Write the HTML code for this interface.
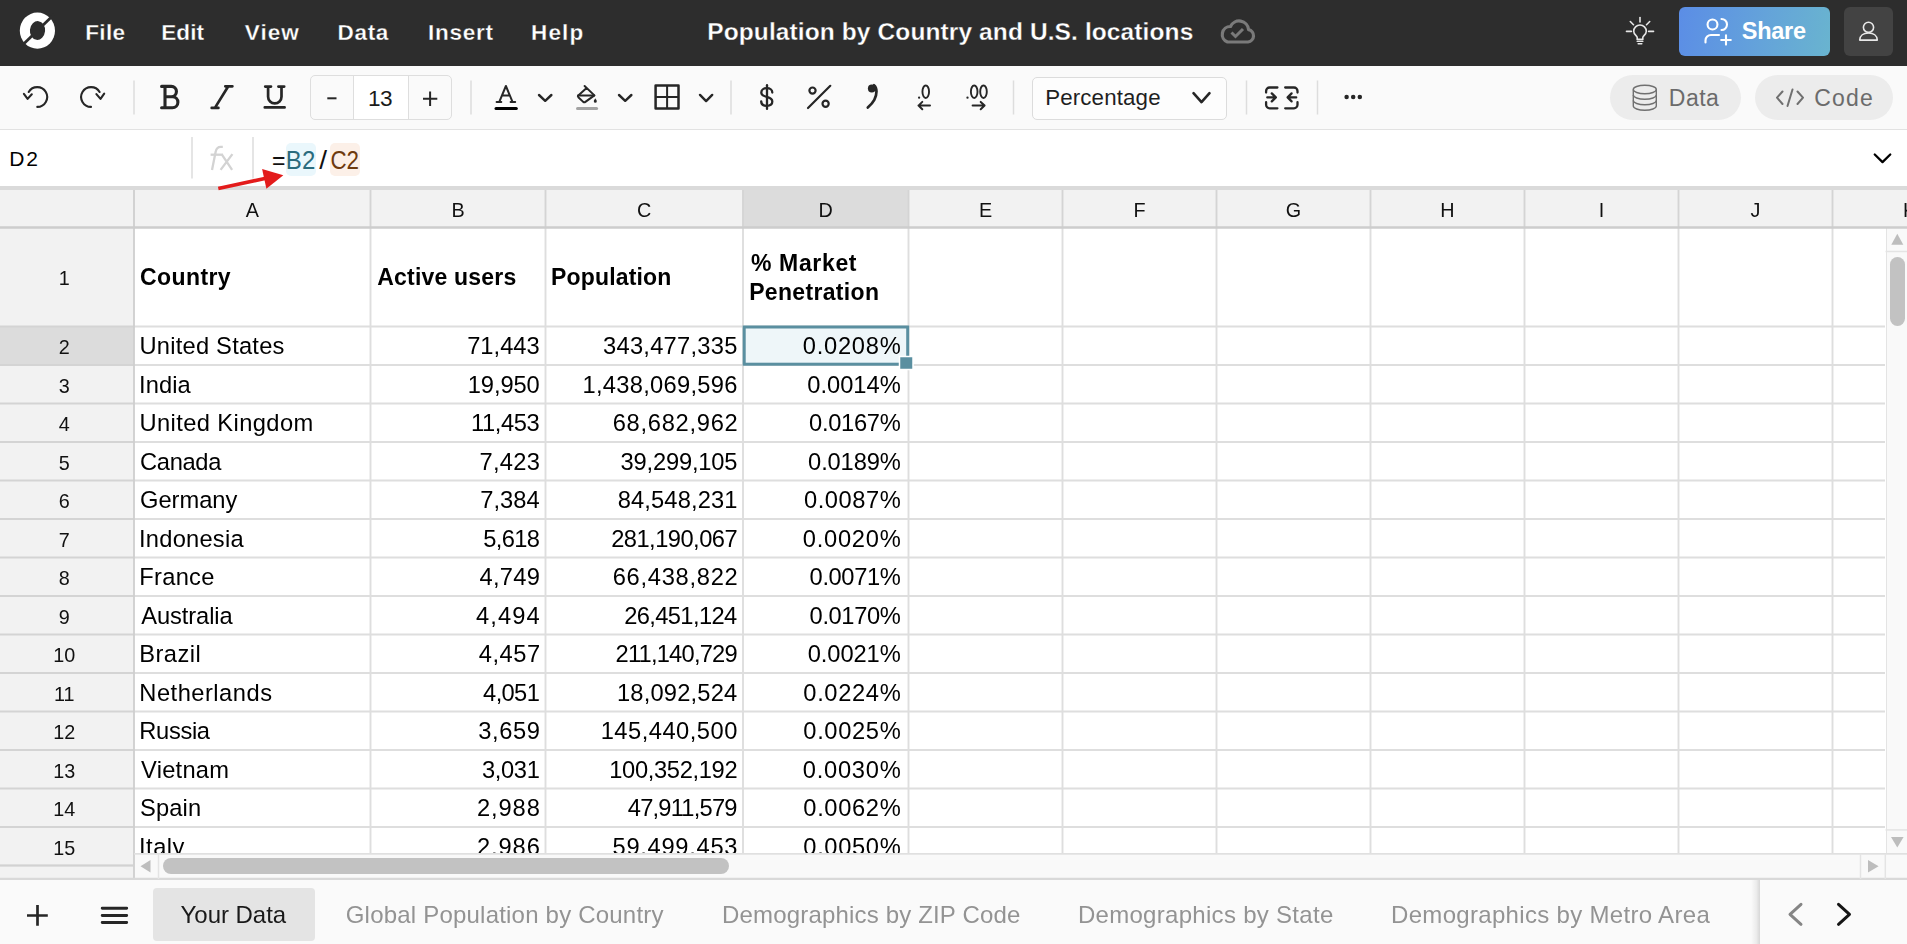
<!DOCTYPE html>
<html><head><meta charset="utf-8"><title>Population by Country and U.S. locations</title>
<style>
html,body{margin:0;padding:0;}
body{width:1907px;height:944px;overflow:hidden;position:relative;background:#fff;font-family:'Liberation Sans', sans-serif;}
svg text{font-family:'Liberation Sans', sans-serif;white-space:pre;}
</style></head><body>
<div style="position:absolute;left:0px;top:0px;width:1907px;height:66px;background:#2d2d2d"></div>
<div style="position:absolute;left:0px;top:66px;width:1907px;height:63px;background:#fafafa"></div>
<div style="position:absolute;left:0px;top:129px;width:1907px;height:1px;background:#e2e2e2"></div>
<div style="position:absolute;left:0px;top:130px;width:1907px;height:56px;background:#fff"></div>
<div style="position:absolute;left:0px;top:186px;width:1907px;height:4px;background:#dadada"></div>
<div style="position:absolute;left:0px;top:190px;width:1907px;height:689px;background:#fff"></div>
<div style="position:absolute;left:0px;top:190px;width:1907px;height:37.5px;background:#f2f2f2"></div>
<div style="position:absolute;left:0px;top:190px;width:134px;height:689px;background:#f2f2f2"></div>
<div style="position:absolute;left:743px;top:190px;width:165px;height:37.5px;background:#dcdcdc"></div>
<div style="position:absolute;left:0px;top:326.5px;width:134px;height:38.5px;background:#dcdcdc"></div>
<div style="position:absolute;left:0px;top:879px;width:1907px;height:65px;background:#fafafa"></div>
<div style="position:absolute;left:1679px;top:7px;width:151px;height:49px;border-radius:6px;background:linear-gradient(100deg,#5b8de6 0%,#64a3da 55%,#69b4cf 100%)"></div>
<div style="position:absolute;left:1844px;top:7px;width:49px;height:49px;background:#434343;border-radius:6px"></div>
<div style="position:absolute;left:309.8px;top:75px;width:140.5px;height:43px;border:1px solid #dedede;border-radius:5px;box-sizing:content-box"></div>
<div style="position:absolute;left:352.9px;top:76px;width:56px;height:43px;background:#fff;border-left:1px solid #dedede;border-right:1px solid #dedede;box-sizing:border-box"></div>
<div style="position:absolute;left:1031.5px;top:76.5px;width:193px;height:41px;border:1px solid #dcdcdc;border-radius:5px;background:#fdfdfd"></div>
<div style="position:absolute;left:1610px;top:75px;width:131px;height:45px;background:#ececec;border-radius:23px"></div>
<div style="position:absolute;left:1755px;top:75px;width:138px;height:45px;background:#ececec;border-radius:23px"></div>
<div style="position:absolute;left:286px;top:142.9px;width:29.9px;height:33px;background:#eaf7fc;border-radius:5px"></div>
<div style="position:absolute;left:330.1px;top:142.9px;width:29.9px;height:33px;background:#fcf0e8;border-radius:5px"></div>
<div style="position:absolute;left:743px;top:326.5px;width:165.5px;height:38.5px;background:#eef6f9"></div>
<div style="position:absolute;left:1885.5px;top:227.5px;width:21.5px;height:626.5px;background:#f9f9f9;border-left:1.5px solid #e4e4e4;box-sizing:border-box"></div>
<div style="position:absolute;left:1889.7px;top:256.8px;width:15px;height:69.6px;background:#c2c2c2;border-radius:8px"></div>
<div style="position:absolute;left:134px;top:853.5px;width:1773px;height:25.5px;background:#f9f9f9"></div>
<div style="position:absolute;left:163px;top:858.3px;width:566px;height:15.8px;background:#c2c2c2;border-radius:8px"></div>
<div style="position:absolute;left:153px;top:888px;width:162px;height:53px;background:#e4e4e4;border-radius:4px"></div>
<div style="position:absolute;left:1751px;top:880px;width:9px;height:64px;background:linear-gradient(90deg,rgba(0,0,0,0) 0%,rgba(0,0,0,0.06) 60%,rgba(0,0,0,0.14) 100%)"></div>
<svg width="1907" height="944" viewBox="0 0 1907 944" style="position:absolute;left:0;top:0">
<ellipse cx="37.4" cy="30.65" rx="17.6" ry="18.1" fill="#fff"/>
<ellipse cx="37.5" cy="30.5" rx="7.6" ry="9.4" fill="#2d2d2d" transform="rotate(6 37.5 30.5)"/>
<line x1="21" y1="46.5" x2="54" y2="14.5" stroke="#2d2d2d" stroke-width="2.8"/>
<text x="85.30" y="39.5" font-size="22.5" fill="#fff" font-weight="bold" textLength="39.77" lengthAdjust="spacing" stroke="#2d2d2d" stroke-width="0.3">File</text>
<text x="161.30" y="39.5" font-size="22.5" fill="#fff" font-weight="bold" textLength="42.65" lengthAdjust="spacing" stroke="#2d2d2d" stroke-width="0.3">Edit</text>
<text x="244.75" y="39.5" font-size="22.5" fill="#fff" font-weight="bold" textLength="54.07" lengthAdjust="spacing" stroke="#2d2d2d" stroke-width="0.3">View</text>
<text x="337.40" y="39.5" font-size="22.5" fill="#fff" font-weight="bold" textLength="50.98" lengthAdjust="spacing" stroke="#2d2d2d" stroke-width="0.3">Data</text>
<text x="428.00" y="39.5" font-size="22.5" fill="#fff" font-weight="bold" textLength="64.88" lengthAdjust="spacing" stroke="#2d2d2d" stroke-width="0.3">Insert</text>
<text x="531.10" y="39.5" font-size="22.5" fill="#fff" font-weight="bold" textLength="52.12" lengthAdjust="spacing" stroke="#2d2d2d" stroke-width="0.3">Help</text>
<text x="707.25" y="39.6" font-size="24.5" fill="#fff" font-weight="bold" textLength="486.06" lengthAdjust="spacing" stroke="#2d2d2d" stroke-width="0.3">Population by Country and U.S. locations</text>
<path d="M1227.5 42 H1248 A6.3 6.3 0 0 0 1248.6 29.6 A9.5 9.5 0 0 0 1230.5 26.5 A8 8 0 0 0 1227.5 42 Z" fill="none" stroke="#7a7a7a" stroke-width="3.2" stroke-linejoin="round"/>
<path d="M1231.5 32.5 L1235.5 36.5 L1243 29" fill="none" stroke="#7a7a7a" stroke-width="3"/>
<g fill="none" stroke="#e6e6e6" stroke-width="1.6" stroke-linecap="round"><path d="M1640 17.5 V22"/><path d="M1630.3 21.5 L1633.5 24.7"/><path d="M1649.7 21.5 L1646.5 24.7"/><path d="M1626.5 31.4 H1631.4"/><path d="M1648.6 31.4 H1653.5"/><path d="M1637.2 39.3 V37.6 C1637.2 35.8 1633.7 34.6 1633.7 31.3 A6.3 6.3 0 0 1 1646.3 31.3 C1646.3 34.6 1642.8 35.8 1642.8 37.6 V39.3 Z"/><path d="M1637.2 41.3 H1642.8"/><path d="M1638.2 43.7 H1641.8"/></g>
<g fill="none" stroke="#fff" stroke-width="2.1" stroke-linecap="round"><circle cx="1712.5" cy="24.5" r="4.95"/><path d="M1721.5 19 A5.5 5.5 0 0 1 1721.5 30"/><path d="M1705.5 42.5 V40.5 A5.5 5.5 0 0 1 1711 35 H1719"/><path d="M1721.2 40 H1730.8 M1726 35.2 V44.6"/></g>
<text x="1741.75" y="39" font-size="23.5" fill="#fff" font-weight="bold" textLength="64.28" lengthAdjust="spacing" >Share</text>
<g fill="none" stroke="#e8e8e8" stroke-width="1.6" stroke-linejoin="round"><circle cx="1868.5" cy="27.3" r="5.1"/><path d="M1859.7 40.1 C1859.9 35.6 1863.5 33 1868.5 33 C1873.5 33 1877.1 35.6 1877.3 40.1 Z"/></g>
<g fill="none" stroke="#262626" stroke-width="2.1" stroke-linecap="round" stroke-linejoin="round"><path d="M37.3 106.9 A9.9 9.9 0 1 0 28.7 92"/><path d="M23.9 93.8 L27.6 98.9 L31.8 94.3"/><path d="M91 106.9 A9.9 9.9 0 1 1 99.6 92"/><path d="M96.4 94.1 L100.5 98.9 L104.2 93.6"/></g>
<line x1="134" y1="80.5" x2="134" y2="114.5" stroke="#dddddd" stroke-width="1.5"/>
<line x1="471" y1="80.5" x2="471" y2="114.5" stroke="#dddddd" stroke-width="1.5"/>
<line x1="731" y1="80.5" x2="731" y2="114.5" stroke="#dddddd" stroke-width="1.5"/>
<line x1="1013.5" y1="80.5" x2="1013.5" y2="114.5" stroke="#dddddd" stroke-width="1.5"/>
<line x1="1246.5" y1="80.5" x2="1246.5" y2="114.5" stroke="#dddddd" stroke-width="1.5"/>
<line x1="1317.5" y1="80.5" x2="1317.5" y2="114.5" stroke="#dddddd" stroke-width="1.5"/>
<g fill="none" stroke="#262626" stroke-width="3.1" stroke-linecap="round" stroke-linejoin="round"><path d="M161.6 86.4 H171.3 A5.15 5.15 0 0 1 171.3 96.7 H165 M171.3 96.7 H172.4 A5.5 5.5 0 0 1 172.4 107.7 H161.6 M165 86.4 V107.7"/></g>
<g fill="none" stroke="#262626" stroke-width="2.7" stroke-linecap="round"><path d="M225.3 86.3 H232.4 M211.7 107.9 H218.4 M228.3 86.3 L214.9 107.9"/><path d="M265.2 86.6 H271 M278.4 86.6 H284.2 M268.1 86.6 V96.7 A6.7 6.7 0 0 0 281.5 96.7 V86.6 M264.8 107.4 H284.6"/></g>
<path d="M327.3 98.3 H336.5" stroke="#262626" stroke-width="2"/>
<text x="367.95" y="105.8" font-size="22.6" fill="#1a1a1a" font-weight="normal" textLength="24.74" lengthAdjust="spacing" >13</text>
<path d="M423 98.8 H437.3 M430.1 91.6 V106" stroke="#262626" stroke-width="2"/>
<g fill="none" stroke="#262626" stroke-width="2" stroke-linecap="round" stroke-linejoin="round"><path d="M499.3 101.8 L505.9 86 L512.5 101.8 M502.3 95.6 H509.5 M496.6 102 H501.3 M510.6 102 H515.2"/></g>
<path d="M496 108.4 H516.3" stroke="#000" stroke-width="3" stroke-linecap="round"/>
<path d="M539.0 95.0 L545.2 100.80000000000001 L551.4000000000001 95.0" fill="none" stroke="#262626" stroke-width="2.4" stroke-linecap="round" stroke-linejoin="round"/>
<g fill="none" stroke="#262626" stroke-width="2" stroke-linecap="round" stroke-linejoin="round"><path d="M584.6 86 L594.4 95.4 L585.4 101.9 Q584.3 102.7 583.2 101.9 L578.3 97.2 Q577.5 96.3 578.3 95.4 L586.6 88"/><path d="M578 95.5 H594.2"/></g><path d="M595.3 98.3 C594.6 99.6 593.8 100.3 593.8 101.3 A1.5 1.5 0 0 0 596.8 101.3 C596.8 100.3 596 99.6 595.3 98.3 Z" fill="#262626"/>
<path d="M577.5 108.5 H596.6" stroke="#a3a3a3" stroke-width="3" stroke-linecap="round"/>
<path d="M619.0 95.0 L625.2 100.80000000000001 L631.4000000000001 95.0" fill="none" stroke="#262626" stroke-width="2.4" stroke-linecap="round" stroke-linejoin="round"/>
<rect x="655.6" y="85.5" width="22.9" height="23" fill="none" stroke="#262626" stroke-width="2.5" stroke-linejoin="round"/><path d="M667.1 85.5 V108.5 M655.6 97 H678.5" stroke="#262626" stroke-width="2"/>
<path d="M700.0 94.95 L706.1 101.05 L712.2 94.95" fill="none" stroke="#262626" stroke-width="2.4" stroke-linecap="round" stroke-linejoin="round"/>
<g fill="none" stroke="#262626" stroke-width="2.3" stroke-linecap="round"><path d="M772.3 92.5 C772.3 89.8 770 88.1 766.8 88.1 C763.6 88.1 761.3 89.8 761.3 92.5 C761.3 95.3 764 96.2 766.8 96.9 C769.8 97.6 772.3 98.7 772.3 101.6 C772.3 104.4 769.8 105.9 766.8 105.9 C763.6 105.9 761.3 104.2 761.2 101.4"/><path d="M767 85.2 V108.9"/></g>
<g fill="none" stroke="#262626" stroke-width="2.2" stroke-linecap="round"><circle cx="812.5" cy="90.6" r="3.1"/><circle cx="825.6" cy="103.7" r="3.1"/><path d="M808 108 L830.3 85.8"/></g>
<path d="M874 85.3 C877.3 88 877.2 94.5 874.3 99.8 C872.8 102.6 870.6 105 867.8 107.5" fill="none" stroke="#262626" stroke-width="2.7" stroke-linecap="round"/><circle cx="871.8" cy="88.5" r="3.9" fill="#262626"/>
<g fill="none" stroke="#262626" stroke-width="1.9"><ellipse cx="925.75" cy="91.7" rx="3.3" ry="6.25"/><ellipse cx="974.2" cy="91.7" rx="3.3" ry="6.25"/><ellipse cx="983.5" cy="91.7" rx="3.3" ry="6.25"/></g>
<circle cx="919.1" cy="97.7" r="1.15" fill="#262626"/><circle cx="967.5" cy="97.7" r="1.15" fill="#262626"/>
<g fill="none" stroke="#262626" stroke-width="2" stroke-linecap="round" stroke-linejoin="round"><path d="M930 105.6 H918.5 M922.3 101.9 L918.5 105.6 L922.3 109.2"/><path d="M972.6 105.6 H984.6 M980.7 101.9 L984.6 105.6 L980.7 109.2"/></g>
<text x="1045.15" y="105.3" font-size="22.3" fill="#1f1f1f" font-weight="normal" textLength="115.40" lengthAdjust="spacing" >Percentage</text>
<path d="M1193.5 93.1 L1201.5 102.1 L1209.5 93.1" fill="none" stroke="#262626" stroke-width="2.6" stroke-linecap="round" stroke-linejoin="round"/>
<g fill="none" stroke="#262626" stroke-width="2.3" stroke-linecap="round" stroke-linejoin="round"><path d="M1277.4 87.5 H1269.6 A3.5 3.5 0 0 0 1266.1 91 V92.6 M1266.1 102.2 V104.8 A3.5 3.5 0 0 0 1269.6 108.3 H1277.4"/><path d="M1285.2 87.5 H1294 A3.5 3.5 0 0 1 1297.5 91 V92.6 M1297.5 102.2 V104.8 A3.5 3.5 0 0 1 1294 108.3 H1285.2"/><path d="M1267.3 97.4 H1275.6 M1271.8 93.4 L1275.8 97.4 L1271.8 101.4"/><path d="M1296.2 97.4 H1287.8 M1291.6 93.4 L1287.6 97.4 L1291.6 101.4"/></g>
<circle cx="1346.6" cy="97.1" r="2.25" fill="#262626"/>
<circle cx="1353.2" cy="97.1" r="2.25" fill="#262626"/>
<circle cx="1359.8" cy="97.1" r="2.25" fill="#262626"/>
<g fill="none" stroke="#707070" stroke-width="1.4"><ellipse cx="1644.8" cy="89.5" rx="11.5" ry="4.2"/><path d="M1633.3 89.5 V106 A11.5 4.2 0 0 0 1656.3 106 V89.5"/><path d="M1633.3 95 A11.5 4.2 0 0 0 1656.3 95 M1633.3 100.5 A11.5 4.2 0 0 0 1656.3 100.5"/></g>
<text x="1668.80" y="105.7" font-size="23" fill="#6b6b6b" font-weight="normal" textLength="50.09" lengthAdjust="spacing" >Data</text>
<g fill="none" stroke="#707070" stroke-width="2" stroke-linecap="round" stroke-linejoin="round"><path d="M1782.5 91.5 L1777 97.7 L1782.5 104 M1797.5 91.5 L1803 97.7 L1797.5 104 M1792.5 89.5 L1787.5 106"/></g>
<text x="1814.15" y="105.7" font-size="23" fill="#6b6b6b" font-weight="normal" textLength="58.53" lengthAdjust="spacing" >Code</text>
<text x="9.25" y="166" font-size="21" fill="#000" font-weight="normal" textLength="28.76" lengthAdjust="spacing" >D2</text>
<line x1="192" y1="137" x2="192" y2="178.5" stroke="#dcdcdc" stroke-width="1.5"/>
<line x1="253" y1="137" x2="253" y2="178.5" stroke="#dcdcdc" stroke-width="1.5"/>
<g fill="none" stroke="#d3d3d3" stroke-width="2.3"><path d="M212 169.9 L215.7 151.6 C216.4 148.4 218.2 146.9 220.6 146.9 H222.8"/><path d="M210.6 154.7 H222.6"/><path d="M221.6 154.1 L232.1 169.9 M232.4 154.1 L220.6 169.9"/></g>
<text x="0" y="168.7" transform="translate(271.94 0) scale(0.9250 1)" font-size="24.9" fill="#111" font-weight="normal">=</text>
<text x="0" y="168.7" transform="translate(285.87 0) scale(0.9651 1)" font-size="24.9" fill="#2a6b7d" font-weight="normal">B2</text>
<text x="0" y="168.9" transform="translate(319.30 0) scale(1.1286 1)" font-size="24.9" fill="#111" font-weight="normal">/</text>
<text x="0" y="168.7" transform="translate(330.38 0) scale(0.8991 1)" font-size="24.9" fill="#6e3a0e" font-weight="normal">C2</text>
<path d="M1874.75 154.5 L1882.5 162.10000000000002 L1890.25 154.5" fill="none" stroke="#000" stroke-width="2.3" stroke-linecap="round" stroke-linejoin="round"/>
</svg>
<svg width="1907" height="944" viewBox="0 0 1907 944" style="position:absolute;left:0;top:0;will-change:transform">
<defs><clipPath id="gridclip"><rect x="134" y="227" width="1751" height="626.5"/></clipPath></defs>
<text x="252.25" y="217" font-size="19.8" fill="#111" font-weight="normal" text-anchor="middle"  style="">A</text>
<text x="458.0" y="217" font-size="19.8" fill="#111" font-weight="normal" text-anchor="middle"  style="">B</text>
<text x="644.25" y="217" font-size="19.8" fill="#111" font-weight="normal" text-anchor="middle"  style="">C</text>
<text x="825.75" y="217" font-size="19.8" fill="#111" font-weight="normal" text-anchor="middle"  style="">D</text>
<text x="985.5" y="217" font-size="19.8" fill="#111" font-weight="normal" text-anchor="middle"  style="">E</text>
<text x="1139.5" y="217" font-size="19.8" fill="#111" font-weight="normal" text-anchor="middle"  style="">F</text>
<text x="1293.5" y="217" font-size="19.8" fill="#111" font-weight="normal" text-anchor="middle"  style="">G</text>
<text x="1447.5" y="217" font-size="19.8" fill="#111" font-weight="normal" text-anchor="middle"  style="">H</text>
<text x="1601.5" y="217" font-size="19.8" fill="#111" font-weight="normal" text-anchor="middle"  style="">I</text>
<text x="1755.5" y="217" font-size="19.8" fill="#111" font-weight="normal" text-anchor="middle"  style="">J</text>
<text x="1903" y="217" font-size="19.8" fill="#111" font-weight="normal" text-anchor="start"  style="">K</text>
<text x="64.3" y="285.3" font-size="19.8" fill="#111" font-weight="normal" text-anchor="middle"  style="">1</text>
<text x="64.3" y="354.05" font-size="19.8" fill="#111" font-weight="normal" text-anchor="middle"  style="">2</text>
<text x="64.3" y="392.55" font-size="19.8" fill="#111" font-weight="normal" text-anchor="middle"  style="">3</text>
<text x="64.3" y="431.05" font-size="19.8" fill="#111" font-weight="normal" text-anchor="middle"  style="">4</text>
<text x="64.3" y="469.55" font-size="19.8" fill="#111" font-weight="normal" text-anchor="middle"  style="">5</text>
<text x="64.3" y="508.05" font-size="19.8" fill="#111" font-weight="normal" text-anchor="middle"  style="">6</text>
<text x="64.3" y="546.55" font-size="19.8" fill="#111" font-weight="normal" text-anchor="middle"  style="">7</text>
<text x="64.3" y="585.05" font-size="19.8" fill="#111" font-weight="normal" text-anchor="middle"  style="">8</text>
<text x="64.3" y="623.55" font-size="19.8" fill="#111" font-weight="normal" text-anchor="middle"  style="">9</text>
<text x="64.3" y="662.05" font-size="19.8" fill="#111" font-weight="normal" text-anchor="middle"  style="">10</text>
<text x="64.3" y="700.55" font-size="19.8" fill="#111" font-weight="normal" text-anchor="middle"  style="">11</text>
<text x="64.3" y="739.05" font-size="19.8" fill="#111" font-weight="normal" text-anchor="middle"  style="">12</text>
<text x="64.3" y="777.55" font-size="19.8" fill="#111" font-weight="normal" text-anchor="middle"  style="">13</text>
<text x="64.3" y="816.05" font-size="19.8" fill="#111" font-weight="normal" text-anchor="middle"  style="">14</text>
<text x="64.3" y="854.55" font-size="19.8" fill="#111" font-weight="normal" text-anchor="middle"  style="">15</text>
<text x="140.10" y="285.3" font-size="23" fill="#000" font-weight="bold" textLength="90.47" lengthAdjust="spacing" >Country</text>
<text x="377.30" y="285.3" font-size="23" fill="#000" font-weight="bold" textLength="138.96" lengthAdjust="spacing" >Active users</text>
<text x="551.10" y="285.3" font-size="23" fill="#000" font-weight="bold" textLength="120.23" lengthAdjust="spacing" >Population</text>
<text x="750.90" y="271.2" font-size="23" fill="#000" font-weight="bold" textLength="105.63" lengthAdjust="spacing" >% Market</text>
<text x="749.20" y="300.2" font-size="23" fill="#000" font-weight="bold" textLength="129.78" lengthAdjust="spacing" >Penetration</text>
<g clip-path="url(#gridclip)">
<text x="139.55" y="354.4" font-size="23.7" fill="#000" font-weight="normal" textLength="144.82" lengthAdjust="spacing" >United States</text>
<text x="467.15" y="354.4" font-size="23.7" fill="#000" font-weight="normal" textLength="72.60" lengthAdjust="spacing" >71,443</text>
<text x="603.00" y="354.4" font-size="23.7" fill="#000" font-weight="normal" textLength="134.38" lengthAdjust="spacing" >343,477,335</text>
<text x="802.80" y="354.4" font-size="23.7" fill="#000" font-weight="normal" textLength="97.97" lengthAdjust="spacing" >0.0208%</text>
<text x="139.05" y="392.9" font-size="23.7" fill="#000" font-weight="normal" textLength="51.72" lengthAdjust="spacing" >India</text>
<text x="467.75" y="392.9" font-size="23.7" fill="#000" font-weight="normal" textLength="72.00" lengthAdjust="spacing" >19,950</text>
<text x="582.45" y="392.9" font-size="23.7" fill="#000" font-weight="normal" textLength="154.93" lengthAdjust="spacing" >1,438,069,596</text>
<text x="807.20" y="392.9" font-size="23.7" fill="#000" font-weight="normal" textLength="93.57" lengthAdjust="spacing" >0.0014%</text>
<text x="139.55" y="431.4" font-size="23.7" fill="#000" font-weight="normal" textLength="173.70" lengthAdjust="spacing" >United Kingdom</text>
<text x="471.05" y="431.4" font-size="23.7" fill="#000" font-weight="normal" textLength="68.70" lengthAdjust="spacing" >11,453</text>
<text x="612.65" y="431.4" font-size="23.7" fill="#000" font-weight="normal" textLength="125.06" lengthAdjust="spacing" >68,682,962</text>
<text x="809.00" y="431.4" font-size="23.7" fill="#000" font-weight="normal" textLength="91.77" lengthAdjust="spacing" >0.0167%</text>
<text x="140.05" y="469.9" font-size="23.7" fill="#000" font-weight="normal" textLength="81.33" lengthAdjust="spacing" >Canada</text>
<text x="479.55" y="469.9" font-size="23.7" fill="#000" font-weight="normal" textLength="60.28" lengthAdjust="spacing" >7,423</text>
<text x="620.60" y="469.9" font-size="23.7" fill="#000" font-weight="normal" textLength="116.86" lengthAdjust="spacing" >39,299,105</text>
<text x="808.10" y="469.9" font-size="23.7" fill="#000" font-weight="normal" textLength="92.67" lengthAdjust="spacing" >0.0189%</text>
<text x="140.05" y="508.4" font-size="23.7" fill="#000" font-weight="normal" textLength="97.22" lengthAdjust="spacing" >Germany</text>
<text x="480.25" y="508.4" font-size="23.7" fill="#000" font-weight="normal" textLength="59.33" lengthAdjust="spacing" >7,384</text>
<text x="617.70" y="508.4" font-size="23.7" fill="#000" font-weight="normal" textLength="119.76" lengthAdjust="spacing" >84,548,231</text>
<text x="803.90" y="508.4" font-size="23.7" fill="#000" font-weight="normal" textLength="96.87" lengthAdjust="spacing" >0.0087%</text>
<text x="139.05" y="546.9" font-size="23.7" fill="#000" font-weight="normal" textLength="104.53" lengthAdjust="spacing" >Indonesia</text>
<text x="483.30" y="546.9" font-size="23.7" fill="#000" font-weight="normal" textLength="56.53" lengthAdjust="spacing" >5,618</text>
<text x="611.15" y="546.9" font-size="23.7" fill="#000" font-weight="normal" textLength="126.48" lengthAdjust="spacing" >281,190,067</text>
<text x="802.80" y="546.9" font-size="23.7" fill="#000" font-weight="normal" textLength="97.97" lengthAdjust="spacing" >0.0020%</text>
<text x="139.30" y="585.4" font-size="23.7" fill="#000" font-weight="normal" textLength="75.08" lengthAdjust="spacing" >France</text>
<text x="479.50" y="585.4" font-size="23.7" fill="#000" font-weight="normal" textLength="60.33" lengthAdjust="spacing" >4,749</text>
<text x="612.65" y="585.4" font-size="23.7" fill="#000" font-weight="normal" textLength="125.06" lengthAdjust="spacing" >66,438,822</text>
<text x="809.60" y="585.4" font-size="23.7" fill="#000" font-weight="normal" textLength="91.17" lengthAdjust="spacing" >0.0071%</text>
<text x="141.30" y="623.9" font-size="23.7" fill="#000" font-weight="normal" textLength="91.32" lengthAdjust="spacing" >Australia</text>
<text x="476.00" y="623.9" font-size="23.7" fill="#000" font-weight="normal" textLength="63.58" lengthAdjust="spacing" >4,494</text>
<text x="624.15" y="623.9" font-size="23.7" fill="#000" font-weight="normal" textLength="113.06" lengthAdjust="spacing" >26,451,124</text>
<text x="809.60" y="623.9" font-size="23.7" fill="#000" font-weight="normal" textLength="91.17" lengthAdjust="spacing" >0.0170%</text>
<text x="139.30" y="662.4" font-size="23.7" fill="#000" font-weight="normal" textLength="61.38" lengthAdjust="spacing" >Brazil</text>
<text x="478.80" y="662.4" font-size="23.7" fill="#000" font-weight="normal" textLength="61.28" lengthAdjust="spacing" >4,457</text>
<text x="615.55" y="662.4" font-size="23.7" fill="#000" font-weight="normal" textLength="122.07" lengthAdjust="spacing" >211,140,729</text>
<text x="807.70" y="662.4" font-size="23.7" fill="#000" font-weight="normal" textLength="93.07" lengthAdjust="spacing" >0.0021%</text>
<text x="139.30" y="700.9" font-size="23.7" fill="#000" font-weight="normal" textLength="132.68" lengthAdjust="spacing" >Netherlands</text>
<text x="483.10" y="700.9" font-size="23.7" fill="#000" font-weight="normal" textLength="56.73" lengthAdjust="spacing" >4,051</text>
<text x="616.95" y="700.9" font-size="23.7" fill="#000" font-weight="normal" textLength="120.26" lengthAdjust="spacing" >18,092,524</text>
<text x="803.30" y="700.9" font-size="23.7" fill="#000" font-weight="normal" textLength="97.47" lengthAdjust="spacing" >0.0224%</text>
<text x="139.30" y="739.4" font-size="23.7" fill="#000" font-weight="normal" textLength="70.71" lengthAdjust="spacing" >Russia</text>
<text x="478.30" y="739.4" font-size="23.7" fill="#000" font-weight="normal" textLength="61.53" lengthAdjust="spacing" >3,659</text>
<text x="600.65" y="739.4" font-size="23.7" fill="#000" font-weight="normal" textLength="136.73" lengthAdjust="spacing" >145,440,500</text>
<text x="803.30" y="739.4" font-size="23.7" fill="#000" font-weight="normal" textLength="97.47" lengthAdjust="spacing" >0.0025%</text>
<text x="141.05" y="777.9" font-size="23.7" fill="#000" font-weight="normal" textLength="87.92" lengthAdjust="spacing" >Vietnam</text>
<text x="482.00" y="777.9" font-size="23.7" fill="#000" font-weight="normal" textLength="57.83" lengthAdjust="spacing" >3,031</text>
<text x="609.25" y="777.9" font-size="23.7" fill="#000" font-weight="normal" textLength="128.38" lengthAdjust="spacing" >100,352,192</text>
<text x="802.80" y="777.9" font-size="23.7" fill="#000" font-weight="normal" textLength="97.97" lengthAdjust="spacing" >0.0030%</text>
<text x="140.05" y="816.4" font-size="23.7" fill="#000" font-weight="normal" textLength="61.14" lengthAdjust="spacing" >Spain</text>
<text x="476.95" y="816.4" font-size="23.7" fill="#000" font-weight="normal" textLength="62.88" lengthAdjust="spacing" >2,988</text>
<text x="627.80" y="816.4" font-size="23.7" fill="#000" font-weight="normal" textLength="109.65" lengthAdjust="spacing" >47,911,579</text>
<text x="803.30" y="816.4" font-size="23.7" fill="#000" font-weight="normal" textLength="97.47" lengthAdjust="spacing" >0.0062%</text>
<text x="139.05" y="854.9" font-size="23.7" fill="#000" font-weight="normal" textLength="45.30" lengthAdjust="spacing" >Italy</text>
<text x="476.95" y="854.9" font-size="23.7" fill="#000" font-weight="normal" textLength="62.88" lengthAdjust="spacing" >2,986</text>
<text x="612.50" y="854.9" font-size="23.7" fill="#000" font-weight="normal" textLength="124.96" lengthAdjust="spacing" >59,499,453</text>
<text x="803.30" y="854.9" font-size="23.7" fill="#000" font-weight="normal" textLength="97.47" lengthAdjust="spacing" >0.0050%</text>
</g>
<line x1="134" y1="326.5" x2="1885" y2="326.5" stroke="#dedede" stroke-width="1.9"/>
<line x1="134" y1="365.0" x2="1885" y2="365.0" stroke="#dedede" stroke-width="1.9"/>
<line x1="134" y1="403.5" x2="1885" y2="403.5" stroke="#dedede" stroke-width="1.9"/>
<line x1="134" y1="442.0" x2="1885" y2="442.0" stroke="#dedede" stroke-width="1.9"/>
<line x1="134" y1="480.5" x2="1885" y2="480.5" stroke="#dedede" stroke-width="1.9"/>
<line x1="134" y1="519.0" x2="1885" y2="519.0" stroke="#dedede" stroke-width="1.9"/>
<line x1="134" y1="557.5" x2="1885" y2="557.5" stroke="#dedede" stroke-width="1.9"/>
<line x1="134" y1="596.0" x2="1885" y2="596.0" stroke="#dedede" stroke-width="1.9"/>
<line x1="134" y1="634.5" x2="1885" y2="634.5" stroke="#dedede" stroke-width="1.9"/>
<line x1="134" y1="673.0" x2="1885" y2="673.0" stroke="#dedede" stroke-width="1.9"/>
<line x1="134" y1="711.5" x2="1885" y2="711.5" stroke="#dedede" stroke-width="1.9"/>
<line x1="134" y1="750.0" x2="1885" y2="750.0" stroke="#dedede" stroke-width="1.9"/>
<line x1="134" y1="788.5" x2="1885" y2="788.5" stroke="#dedede" stroke-width="1.9"/>
<line x1="134" y1="827.0" x2="1885" y2="827.0" stroke="#dedede" stroke-width="1.9"/>
<line x1="0" y1="326.5" x2="134" y2="326.5" stroke="#d4d4d4" stroke-width="1.9"/>
<line x1="0" y1="365.0" x2="134" y2="365.0" stroke="#d4d4d4" stroke-width="1.9"/>
<line x1="0" y1="403.5" x2="134" y2="403.5" stroke="#d4d4d4" stroke-width="1.9"/>
<line x1="0" y1="442.0" x2="134" y2="442.0" stroke="#d4d4d4" stroke-width="1.9"/>
<line x1="0" y1="480.5" x2="134" y2="480.5" stroke="#d4d4d4" stroke-width="1.9"/>
<line x1="0" y1="519.0" x2="134" y2="519.0" stroke="#d4d4d4" stroke-width="1.9"/>
<line x1="0" y1="557.5" x2="134" y2="557.5" stroke="#d4d4d4" stroke-width="1.9"/>
<line x1="0" y1="596.0" x2="134" y2="596.0" stroke="#d4d4d4" stroke-width="1.9"/>
<line x1="0" y1="634.5" x2="134" y2="634.5" stroke="#d4d4d4" stroke-width="1.9"/>
<line x1="0" y1="673.0" x2="134" y2="673.0" stroke="#d4d4d4" stroke-width="1.9"/>
<line x1="0" y1="711.5" x2="134" y2="711.5" stroke="#d4d4d4" stroke-width="1.9"/>
<line x1="0" y1="750.0" x2="134" y2="750.0" stroke="#d4d4d4" stroke-width="1.9"/>
<line x1="0" y1="788.5" x2="134" y2="788.5" stroke="#d4d4d4" stroke-width="1.9"/>
<line x1="0" y1="827.0" x2="134" y2="827.0" stroke="#d4d4d4" stroke-width="1.9"/>
<line x1="0" y1="865.5" x2="134" y2="865.5" stroke="#d4d4d4" stroke-width="1.9"/>
<line x1="370.5" y1="227.5" x2="370.5" y2="853.5" stroke="#dedede" stroke-width="1.9"/>
<line x1="370.5" y1="190" x2="370.5" y2="227.5" stroke="#d4d4d4" stroke-width="1.9"/>
<line x1="545.5" y1="227.5" x2="545.5" y2="853.5" stroke="#dedede" stroke-width="1.9"/>
<line x1="545.5" y1="190" x2="545.5" y2="227.5" stroke="#d4d4d4" stroke-width="1.9"/>
<line x1="743" y1="227.5" x2="743" y2="853.5" stroke="#dedede" stroke-width="1.9"/>
<line x1="743" y1="190" x2="743" y2="227.5" stroke="#d4d4d4" stroke-width="1.9"/>
<line x1="908.5" y1="227.5" x2="908.5" y2="853.5" stroke="#dedede" stroke-width="1.9"/>
<line x1="908.5" y1="190" x2="908.5" y2="227.5" stroke="#d4d4d4" stroke-width="1.9"/>
<line x1="1062.5" y1="227.5" x2="1062.5" y2="853.5" stroke="#dedede" stroke-width="1.9"/>
<line x1="1062.5" y1="190" x2="1062.5" y2="227.5" stroke="#d4d4d4" stroke-width="1.9"/>
<line x1="1216.5" y1="227.5" x2="1216.5" y2="853.5" stroke="#dedede" stroke-width="1.9"/>
<line x1="1216.5" y1="190" x2="1216.5" y2="227.5" stroke="#d4d4d4" stroke-width="1.9"/>
<line x1="1370.5" y1="227.5" x2="1370.5" y2="853.5" stroke="#dedede" stroke-width="1.9"/>
<line x1="1370.5" y1="190" x2="1370.5" y2="227.5" stroke="#d4d4d4" stroke-width="1.9"/>
<line x1="1524.5" y1="227.5" x2="1524.5" y2="853.5" stroke="#dedede" stroke-width="1.9"/>
<line x1="1524.5" y1="190" x2="1524.5" y2="227.5" stroke="#d4d4d4" stroke-width="1.9"/>
<line x1="1678.5" y1="227.5" x2="1678.5" y2="853.5" stroke="#dedede" stroke-width="1.9"/>
<line x1="1678.5" y1="190" x2="1678.5" y2="227.5" stroke="#d4d4d4" stroke-width="1.9"/>
<line x1="1832.5" y1="227.5" x2="1832.5" y2="853.5" stroke="#dedede" stroke-width="1.9"/>
<line x1="1832.5" y1="190" x2="1832.5" y2="227.5" stroke="#d4d4d4" stroke-width="1.9"/>
<line x1="134" y1="190" x2="134" y2="879" stroke="#cfcfcf" stroke-width="1.8"/>
<line x1="0" y1="227.5" x2="1907" y2="227.5" stroke="#cdcdcd" stroke-width="2.4"/>
<rect x="744.2" y="327" width="163.5" height="37.2" fill="none" stroke="#5a8fa0" stroke-width="3"/>
<rect x="899.5" y="356.5" width="13.5" height="13" fill="#5a8fa0" stroke="#fff" stroke-width="1.5"/>
<path d="M218.3 188.4 L266 178.3" stroke="#e31b1b" stroke-width="3.6" fill="none"/><path d="M283.3 175.2 L262.1 169.1 L266.4 188.7 Z" fill="#e31b1b"/>
<path d="M1891.3 244.8 L1897.3 233.7 L1903.3 244.8 Z" fill="#bdbdbd"/>
<line x1="1885.5" y1="251.5" x2="1907" y2="251.5" stroke="#e4e4e4" stroke-width="1.5"/>
<path d="M1891 837 L1897.3 847.6 L1903.6 837 Z" fill="#bdbdbd"/>
<line x1="1885.5" y1="829.9" x2="1907" y2="829.9" stroke="#e4e4e4" stroke-width="1.5"/>
<line x1="134" y1="853.9" x2="1907" y2="853.9" stroke="#e0e0e0" stroke-width="1.6"/>
<line x1="0" y1="865.5" x2="134" y2="865.5" stroke="#d2d2d2" stroke-width="1.6"/>
<line x1="0" y1="878.9" x2="1907" y2="878.9" stroke="#d9d9d9" stroke-width="2.3"/>
<line x1="158.5" y1="853.9" x2="158.5" y2="879" stroke="#e4e4e4" stroke-width="1.5"/>
<path d="M150.5 860 L140.5 866.2 L150.5 872.5 Z" fill="#bdbdbd"/>
<line x1="1860.5" y1="853.9" x2="1860.5" y2="879" stroke="#e4e4e4" stroke-width="1.5"/>
<line x1="1885.3" y1="853.9" x2="1885.3" y2="879" stroke="#e4e4e4" stroke-width="1.5"/>
<path d="M1868 860 L1878.6 866.2 L1868 872.5 Z" fill="#bdbdbd"/>
<path d="M37.5 905 V925.8 M27 915.5 H47.8" stroke="#262626" stroke-width="2.7"/>
<path d="M102.2 908.3 H126.7 M102.2 915.5 H126.7 M102.2 922.5 H126.7" stroke="#262626" stroke-width="2.9" stroke-linecap="round"/>
<text x="180.60" y="923.2" font-size="24" fill="#1a1a1a" font-weight="normal" textLength="105.51" lengthAdjust="spacing" >Your Data</text>
<text x="345.75" y="923.2" font-size="24" fill="#939393" font-weight="normal" textLength="317.74" lengthAdjust="spacing" >Global Population by Country</text>
<text x="722.10" y="923.2" font-size="24" fill="#939393" font-weight="normal" textLength="298.23" lengthAdjust="spacing" >Demographics by ZIP Code</text>
<text x="1077.90" y="923.2" font-size="24" fill="#939393" font-weight="normal" textLength="255.37" lengthAdjust="spacing" >Demographics by State</text>
<text x="1391.00" y="923.2" font-size="24" fill="#939393" font-weight="normal" textLength="318.76" lengthAdjust="spacing" >Demographics by Metro Area</text>
<path d="M1801 904.3 L1790 914.3 L1801 924.3" fill="none" stroke="#858585" stroke-width="3" stroke-linecap="round" stroke-linejoin="round"/>
<path d="M1838.5 904.3 L1849.5 914.3 L1838.5 924.3" fill="none" stroke="#151515" stroke-width="3" stroke-linecap="round" stroke-linejoin="round"/>
</svg>
</body></html>
